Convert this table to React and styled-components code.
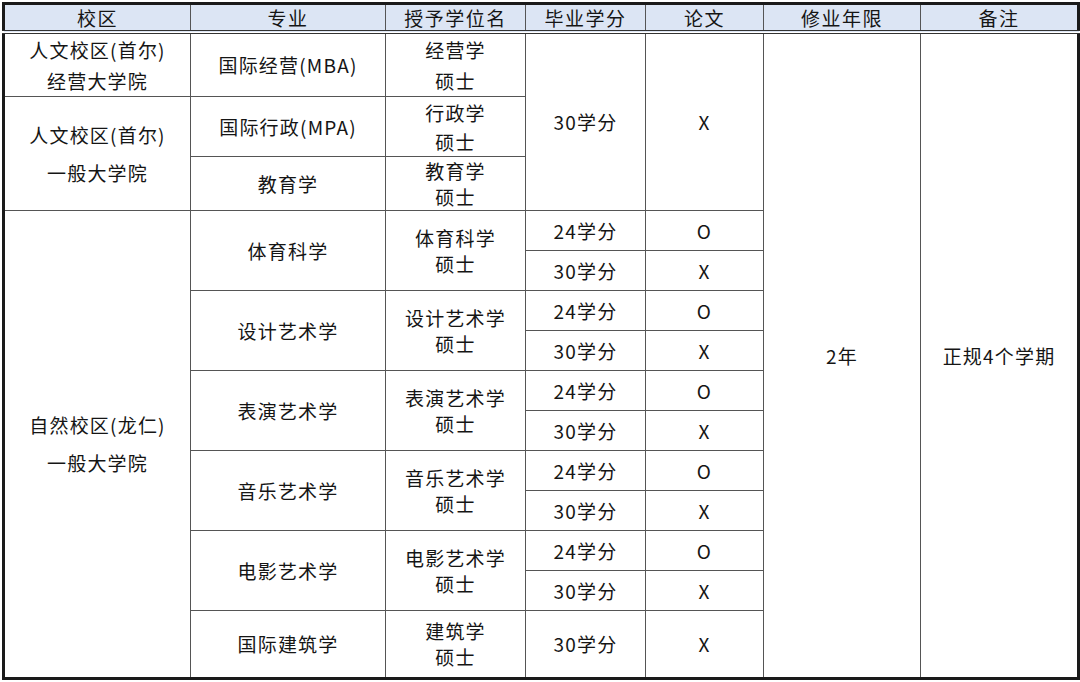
import React from 'react';
import styled, { createGlobalStyle } from 'styled-components';

const GlobalStyle = createGlobalStyle`
  html, body {
    margin: 0;
    padding: 0;
    background: #ffffff;
  }
  body {
    font-family: "Noto Sans CJK SC", "Noto Sans", sans-serif;
    color: #151515;
  }
`;

const Page = styled.div`
  padding: 2px 3px 0 2px;
  width: 1080px;
  height: 682px;
  box-sizing: border-box;
  overflow: hidden;
`;

const Table = styled.table`
  width: 1075px;
  border-collapse: collapse;
  table-layout: fixed;
  border: 3px solid #1a1a1a;
`;

const HeadCell = styled.th`
  height: 25px;
  padding: 0;
  background: #dce5f4;
  font-weight: 400;
  font-size: 19px;
  letter-spacing: 1.5px;
  line-height: 25px;
  text-align: center;
  border-left: 1px solid #555;
  border-right: 1px solid #555;
  border-bottom: 4px double #333;
`;

const Cell = styled.td`
  padding: 0;
  height: ${(p) => p.$h}px;
  font-size: 19px;
  letter-spacing: 1.2px;
  line-height: ${(p) => p.$lh || 26}px;
  text-align: center;
  vertical-align: middle;
  border: 1px solid #555;
  white-space: nowrap;
`;

const columns = [
  { label: '校区', width: 187 },
  { label: '专业', width: 195 },
  { label: '授予学位名', width: 140 },
  { label: '毕业学分', width: 120 },
  { label: '论文', width: 118 },
  { label: '修业年限', width: 157 },
  { label: '备注', width: 158 },
];

const Lines = ({ lines }) =>
  lines.map((l, i) => (
    <React.Fragment key={i}>
      {i > 0 && <br />}
      {l}
    </React.Fragment>
  ));

const artMajors = [
  { major: '体育科学', degree: ['体育科学', '硕士'] },
  { major: '设计艺术学', degree: ['设计艺术学', '硕士'] },
  { major: '表演艺术学', degree: ['表演艺术学', '硕士'] },
  { major: '音乐艺术学', degree: ['音乐艺术学', '硕士'] },
  { major: '电影艺术学', degree: ['电影艺术学', '硕士'] },
];

export default function App() {
  return (
    <Page>
      <GlobalStyle />
      <Table>
        <colgroup>
          {columns.map((c) => (
            <col key={c.label} style={{ width: c.width }} />
          ))}
        </colgroup>
        <thead>
          <tr>
            {columns.map((c) => (
              <HeadCell key={c.label}>{c.label}</HeadCell>
            ))}
          </tr>
        </thead>
        <tbody>
          <tr>
            <Cell $h={62} $lh={31}>
              <Lines lines={['人文校区(首尔)', '经营大学院']} />
            </Cell>
            <Cell $h={62}>国际经营(MBA)</Cell>
            <Cell $h={62} $lh={31}>
              <Lines lines={['经营学', '硕士']} />
            </Cell>
            <Cell rowSpan={3}>30学分</Cell>
            <Cell rowSpan={3}>X</Cell>
            <Cell rowSpan={15}>2年</Cell>
            <Cell rowSpan={15}>正规4个学期</Cell>
          </tr>
          <tr>
            <Cell rowSpan={2} $lh={38}>
              <Lines lines={['人文校区(首尔)', '一般大学院']} />
            </Cell>
            <Cell $h={59}>国际行政(MPA)</Cell>
            <Cell $h={59} $lh={29}>
              <Lines lines={['行政学', '硕士']} />
            </Cell>
          </tr>
          <tr>
            <Cell $h={53}>教育学</Cell>
            <Cell $h={53}>
              <Lines lines={['教育学', '硕士']} />
            </Cell>
          </tr>
          {artMajors.map((m, i) => (
            <React.Fragment key={m.major}>
              <tr>
                {i === 0 && (
                  <Cell rowSpan={11} $lh={38}>
                    <Lines lines={['自然校区(龙仁)', '一般大学院']} />
                  </Cell>
                )}
                <Cell rowSpan={2}>{m.major}</Cell>
                <Cell rowSpan={2}>
                  <Lines lines={m.degree} />
                </Cell>
                <Cell $h={39}>24学分</Cell>
                <Cell $h={39}>O</Cell>
              </tr>
              <tr>
                <Cell $h={39}>30学分</Cell>
                <Cell $h={39}>X</Cell>
              </tr>
            </React.Fragment>
          ))}
          <tr>
            <Cell $h={66}>国际建筑学</Cell>
            <Cell $h={66}>
              <Lines lines={['建筑学', '硕士']} />
            </Cell>
            <Cell $h={66}>30学分</Cell>
            <Cell $h={66}>X</Cell>
          </tr>
        </tbody>
      </Table>
    </Page>
  );
}
